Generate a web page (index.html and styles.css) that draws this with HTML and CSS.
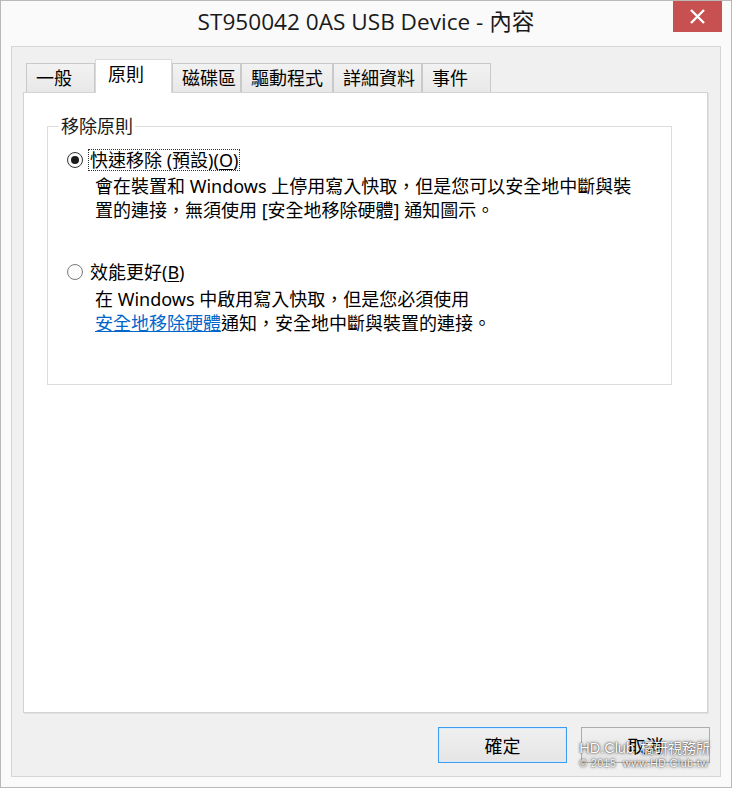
FILE: index.html
```html
<!DOCTYPE html>
<html lang="zh-Hant">
<head>
<meta charset="utf-8">
<title>ST950042 0AS USB Device - 內容</title>
<link rel="stylesheet" href="styles.css">
</head>
<body>
<div class="window">
  <div class="titlebar">
    <div class="spacer"></div>
    <div class="title">ST950042 0AS USB Device - 內容</div>
    <div class="tb-right"><div class="close">
      <svg width="17" height="15" viewBox="0 0 17 15"><path d="M2 1 L15 14 M15 1 L2 14" stroke="#fff" stroke-width="2.4" fill="none"/></svg>
    </div></div>
  </div>
  <div class="client">
    <div class="tabs">
      <div class="tab w1">一般</div>
      <div class="tab sel w2">原則</div>
      <div class="tab w3">磁碟區</div>
      <div class="tab w4">驅動程式</div>
      <div class="tab w5">詳細資料</div>
      <div class="tab w6">事件</div>
    </div>
    <div class="panel">
      <fieldset class="group">
        <legend>移除原則</legend>
        <div class="option first">
          <span class="radio checked"><span class="dot"></span></span>
          <span class="label focus">快速移除 (預設)(<u>O</u>)</span>
        </div>
        <div class="desc">會在裝置和 Windows 上停用寫入快取，但是您可以安全地中斷與裝<br>置的連接，無須使用 [安全地移除硬體] 通知圖示。</div>
        <div class="option second">
          <span class="radio"></span>
          <span class="label">效能更好(<u>B</u>)</span>
        </div>
        <div class="desc">在 Windows 中啟用寫入快取，但是您必須使用<br><a class="link">安全地移除硬體</a>通知，安全地中斷與裝置的連接。</div>
      </fieldset>
    </div>
    <div class="buttons">
      <div class="btn default">確定</div>
      <div class="btn">取消</div>
    </div>
  </div>
  <div class="watermark">
    <div class="wm1"><span class="wm-en">HD.Club</span><span class="wm-zh">橘研視務所</span></div>
    <div class="wm2">© 2015  www.HD.Club.tw</div>
  </div>
</div>
</body>
</html>
```
FILE: styles.css
```css
* { box-sizing: border-box; }
html, body { margin: 0; padding: 0; background: #fafafa; }
body {
  font-family: "Noto Sans", "Noto Sans CJK TC", sans-serif;
  font-size: 18px;
  color: #000;
}
.window {
  position: relative;
  width: 732px;
  height: 788px;
  border: 1px solid #b9b9b9;
  background: #fafafa;
  display: flex;
  flex-direction: column;
}
.titlebar {
  height: 45px;
  display: grid;
  grid-template-columns: 1fr auto 1fr;
}
.title {
  font-family: "Open Sans", "Noto Sans CJK TC", sans-serif;
  font-size: 22.6px;
  line-height: 42px;
  color: #1a1a1a;
  white-space: nowrap;
}
.tb-right { display: flex; justify-content: flex-end; align-items: flex-start; padding-right: 9px; }
.close {
  width: 49px;
  height: 31px;
  background: #c75050;
  display: flex;
  align-items: center;
  justify-content: center;
}
.client {
  margin: 0 10px 10px;
  height: 731px;
  border: 1px solid #d6d6d6;
  background: #f0f0f0;
  padding: 12px 12px 13px 11px;
  display: flex;
  flex-direction: column;
}
.tabs {
  display: flex;
  align-items: flex-end;
  height: 33px;
  padding-left: 3px;
  position: relative;
  z-index: 1;
}
.tab {
  height: 29px;
  border: 1px solid #c9c9c9;
  border-bottom: none;
  background: linear-gradient(#f2f2f2, #e8e8e8);
  line-height: 28px;
  padding-left: 9px;
  white-space: nowrap;
}
.tab.sel {
  height: 34px;
  margin-bottom: -1px;
  background: #fff;
  border-color: #d9d9d9;
  line-height: 29px;
  padding-left: 12px;
}
.w1 { width: 69px; }
.w2 { width: 77px; }
.w3 { width: 69px; }
.w4 { width: 92px; }
.w5 { width: 89px; }
.w6 { width: 69px; }
.panel {
  width: 685px;
  height: 621px;
  background: #fff;
  border: 1px solid #d3d3d3;
  box-shadow: 1px 1px 0 #e2e2e2;
  padding: 0 0 0 23px;
}
.group {
  margin: 21px 0 0 0;
  width: 625px;
  border: 1px solid #dcdcdc;
  padding: 0 0 49px 0;
  min-width: 0;
}
.group legend {
  margin-left: 11px;
  padding: 0 2px;
  line-height: 24px;
  color: #1a1a1a;
}
.option {
  display: flex;
  align-items: center;
  height: 24px;
  padding-left: 19px;
}
.option.first { margin-top: 10px; }
.option.second { margin-top: 38px; }
.radio {
  width: 16px;
  height: 16px;
  border-radius: 50%;
  border: 1px solid #7a7a7a;
  background: #fcfcfc;
  display: flex;
  align-items: center;
  justify-content: center;
  margin-right: 5px;
  flex: none;
}
.radio.checked { border-color: #333; }
.dot { width: 8px; height: 8px; border-radius: 50%; background: #1a1a1a; }
.label {
  line-height: 20px;
  padding: 0 1px;
  border: 1px dotted transparent;
}
.label.focus { border-color: #333; }
.label u { text-decoration-thickness: 1px; text-underline-offset: 2px; }
.desc {
  margin-left: 47px;
  margin-top: 2px;
  line-height: 24px;
  white-space: nowrap;
}
.option.second + .desc { margin-top: 3px; }
.link { color: #0066cc; text-decoration: underline; text-decoration-thickness: 1px; }
.buttons {
  display: flex;
  justify-content: flex-end;
  gap: 14px;
  margin-top: 14px;
  margin-right: -2px;
}
.btn {
  width: 129px;
  height: 36px;
  border: 1px solid #acacac;
  background: linear-gradient(#f0f0f0, #e5e5e5);
  display: flex;
  align-items: center;
  justify-content: center;
}
.btn.default { border-color: #3c9cf0; box-shadow: inset 0 0 0 1px #d6eafc; }
.watermark {
  position: absolute;
  right: 21px;
  bottom: 17px;
  color: #fff;
  text-shadow: 0 0 3px rgba(0,0,0,0.8), 0 0 1px rgba(0,0,0,0.6);
  font-family: "Liberation Sans", "Noto Sans CJK TC", sans-serif;
  text-align: left;
}
.wm1 { font-size: 14.5px; line-height: 17px; display: flex; gap: 6px; white-space: nowrap; }
.wm-zh { font-size: 14px; }
.wm2 { font-size: 10.5px; line-height: 13px; letter-spacing: 0.5px; white-space: pre; }
```
